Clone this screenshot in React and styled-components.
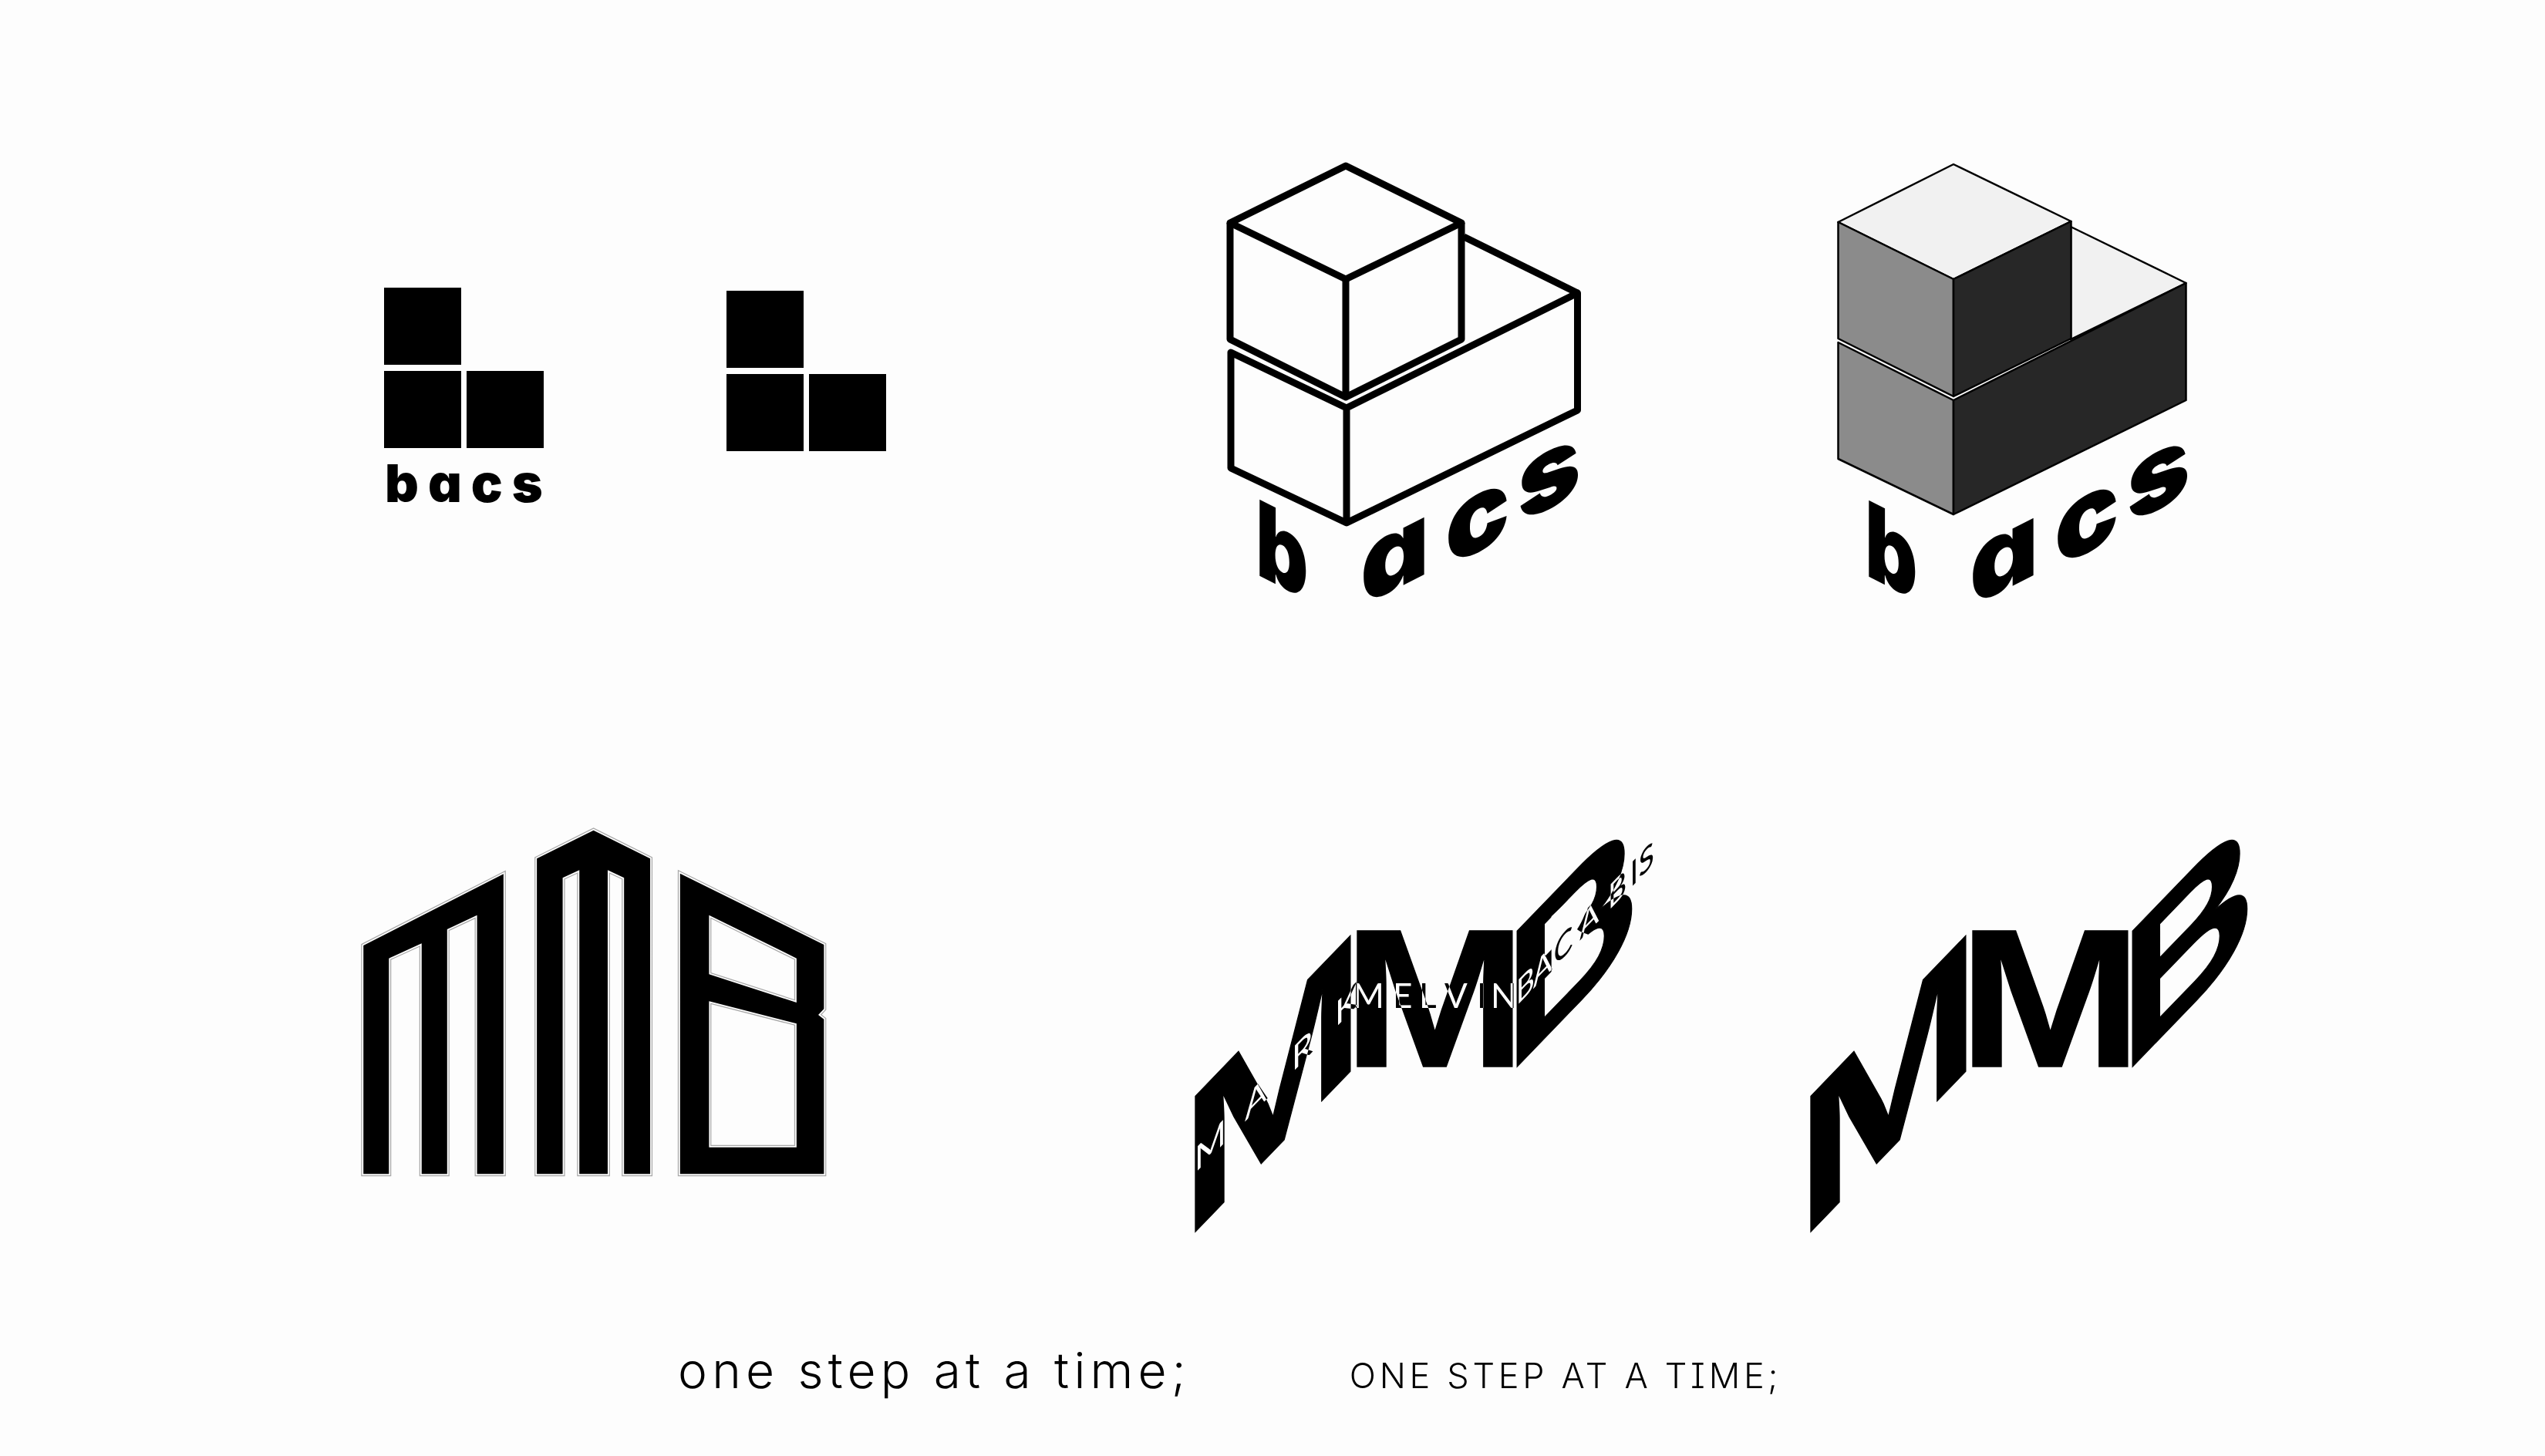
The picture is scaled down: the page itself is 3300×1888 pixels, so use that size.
import React from "react";
import styled, { createGlobalStyle } from "styled-components";

const GlobalStyle = createGlobalStyle`
  html, body {
    margin: 0;
    padding: 0;
    background: #fdfdfd;
  }
`;

const Sheet = styled.div`
  width: 3300px;
  height: 1888px;
  overflow: hidden;
  background: #fdfdfd;
  color: #000;
  font-family: "Liberation Sans", Arial, sans-serif;
`;

const TopRow = styled.section`
  display: flex;
  align-items: flex-start;
  height: 620px;
  padding: 190px 0 0 498px;
`;

const BottomRow = styled.section`
  display: flex;
  align-items: flex-start;
  height: 570px;
  padding: 240px 0 0 450px;
`;

const SloganRow = styled.section`
  display: flex;
  align-items: baseline;
  padding: 112px 0 0 879px;
`;

const BlockMark = styled.div`
  display: grid;
  grid-template-columns: 100px 100px;
  grid-auto-rows: 100px;
  column-gap: 7px;
  row-gap: 8px;
  margin-top: ${(p) => p.$top}px;
  margin-left: ${(p) => p.$left || 0}px;
  width: 207px;
`;

const Block = styled.div`
  background: #000;
  grid-column: ${(p) => p.$col};
`;

const Wordmark = styled.div`
  grid-column: 1 / 3;
  margin-top: 1px;
  padding-left: 1px;
  font-family: Inter, "Liberation Sans", sans-serif;
  font-weight: 900;
  font-feature-settings: "cv11";
  font-size: 68px;
  line-height: 72px;
  letter-spacing: 12px;
  white-space: nowrap;
`;

const Mark = styled.svg`
  display: block;
  flex: none;
  overflow: visible;
  margin-left: ${(p) => p.$left || 0}px;
  margin-top: ${(p) => p.$top || 0}px;
`;

const LogoText = styled.text`
  font-family: Inter, "Liberation Sans", sans-serif;
  font-weight: 900;
  font-feature-settings: "cv11";
  font-size: 136px;
  fill: #000;
`;

const HeavyLetter = styled.text`
  font-family: "Liberation Sans", Arial, sans-serif;
  font-weight: 700;
  font-size: 256px;
  fill: #000;
  stroke: #000;
  stroke-width: 1.5px;
`;

const NameText = styled.text`
  font-family: Lato, "Liberation Sans", sans-serif;
  font-weight: 400;
  font-size: 44px;
  fill: #fff;
  mix-blend-mode: difference;
`;

const SloganLower = styled.div`
  font-family: Inter, "Noto Sans", sans-serif;
  font-weight: 350;
  font-size: 64px;
  line-height: 90px;
  letter-spacing: 6.2px;
  white-space: nowrap;
`;

const SloganUpper = styled.div`
  margin-left: 206px;
  font-family: Inter, "Noto Sans", sans-serif;
  font-weight: 350;
  font-feature-settings: "cv08";
  font-size: 45px;
  line-height: 90px;
  letter-spacing: 4.7px;
  white-space: nowrap;
`;

// skewed letters sit along the edge of the boxes
function BacsLetters({ dx = 0, dy = 0 }) {
  const letters = [
    { ch: "b", x: 1629, y: 744, skew: 27, sx: 0.78 },
    { ch: "a", x: 1765, y: 787, skew: -27, sx: 1.02 },
    { ch: "c", x: 1875, y: 737, skew: -27, sx: 1.02 },
    { ch: "s", x: 1969, y: 680, skew: -27, sx: 1.02 },
  ];
  return letters.map((l) => (
    <LogoText
      key={l.ch}
      transform={`translate(${l.x + dx} ${l.y + dy}) skewY(${l.skew}) scale(${l.sx} 1)`}
    >
      {l.ch}
    </LogoText>
  ));
}

function OutlineCubes() {
  return (
    <Mark width="540" height="620" viewBox="1560 190 540 620" $left={410}>
      <g fill="none" stroke="#000" strokeWidth="9" strokeLinejoin="round">
        <path d="M1596 289 L1746 215 L1896 289 L1746 362 Z" />
        <path d="M1596 289 V440 L1746 515 L1896 440 V289 M1746 362 V515" />
        <path d="M1597 457 V607 L1747 678 L2046.5 532 V380 L1747 529 Z M1747 529 V678" />
        <path d="M1899 307 L2046.5 380" />
      </g>
      <BacsLetters />
    </Mark>
  );
}

function ShadedCubes() {
  return (
    <Mark width="540" height="620" viewBox="2350 190 540 620" $left={250}>
      <g stroke="#000" strokeWidth="2.5" strokeLinejoin="round">
        <path fill="#f1f1f1" d="M2686 294 L2835.5 367 L2686 440 Z" />
        <path fill="#f1f1f1" d="M2384.5 288 L2534 213 L2686.5 287 L2534 362 Z" />
        <path fill="#8b8b8b" d="M2384.5 288 L2534 362 V514 L2384.5 439 Z" />
        <path fill="#272727" d="M2534 362 L2686.5 287 V439 L2534 514 Z" />
        <path fill="#8b8b8b" d="M2384.5 444 L2534 519 V667 L2384.5 595 Z" />
        <path fill="#272727" d="M2534 519 L2835.5 367 V519 L2534 667 Z" />
      </g>
      <BacsLetters dx={790} dy={1} />
    </Mark>
  );
}

const houseOutline =
  "M52 528 L497 250 V1417 H413 V410 L318 465 V1417 H237 V520 L133 578 V1417 H52 Z " +
  "M603 190 L783 80 L963 190 V1417 H880 V265 L828 235 V1417 H738 V235 L685 265 V1417 H603 Z " +
  "M1058 248 L1515 525 V775 L1497 798 L1515 815 V1417 H1058 Z " +
  "M1150 410 L1428 578 V750 L1150 640 Z M1150 745 L1428 832 V1313 H1150 Z";

function HouseMark() {
  return (
    <Mark width="640" height="500" viewBox="0 0 1568 1500" preserveAspectRatio="none">
      <path d={houseOutline} fill="none" stroke="#a8a8a8" strokeWidth="6" vectorEffect="non-scaling-stroke" />
      <path d={houseOutline} fill="none" stroke="#fdfdfd" strokeWidth="3.5" vectorEffect="non-scaling-stroke" />
      <path d={houseOutline} fill="#000" fillRule="evenodd" />
    </Mark>
  );
}

function SkewedMmb({ dx = 0 }) {
  return (
    <>
      <HeavyLetter transform={`translate(${2329 + dx} 1617) skewY(-46) scale(1.12 1)`}>M</HeavyLetter>
      <HeavyLetter transform={`translate(${2539 + dx} 1383) scale(1.12 1)`}>M</HeavyLetter>
      <HeavyLetter transform={`translate(${2749 + dx} 1400) skewY(-46) scale(0.95 1)`}>B</HeavyLetter>
    </>
  );
}

function NamedMmb() {
  return (
    <Mark width="640" height="560" viewBox="1530 1060 640 560" $left={440} $top={10}>
      <SkewedMmb dx={-798} />
      {/* this version of the B has the middle bar opened up */}
      <path
        fill="#fdfdfd"
        d="M2011.7 1188.3 L2050 1151.7 C2060 1145 2065 1150 2061.7 1163.3 C2058 1180 2052 1195 2045 1205 C2053 1212 2065 1210 2068.3 1220 C2070 1233 2063 1243 2053 1253 L2011.7 1300 Z"
      />
      <NameText x="0 65 126 182" transform="translate(1549 1522) skewY(-46)">MARK</NameText>
      <NameText x="1754 1806 1840 1873 1915 1933" y="1307">MELVIN</NameText>
      <NameText x="0 26 58 98 142 176 189" transform="translate(1966 1305) skewY(-46) scale(0.84 1)">BACABIS</NameText>
    </Mark>
  );
}

function PlainMmb() {
  return (
    <Mark width="620" height="560" viewBox="2320 1060 620 560" $left={150} $top={10}>
      <SkewedMmb />
    </Mark>
  );
}

export default function App() {
  return (
    <Sheet>
      <GlobalStyle />
      <TopRow>
        <BlockMark $top={183}>
          <Block $col={1} />
          <div />
          <Block $col={1} />
          <Block $col={2} />
          <Wordmark>bacs</Wordmark>
        </BlockMark>
        <BlockMark $top={187} $left={237}>
          <Block $col={1} />
          <div />
          <Block $col={1} />
          <Block $col={2} />
        </BlockMark>
        <OutlineCubes />
        <ShadedCubes />
      </TopRow>
      <BottomRow>
        <HouseMark />
        <NamedMmb />
        <PlainMmb />
      </BottomRow>
      <SloganRow>
        <SloganLower>one step at a time;</SloganLower>
        <SloganUpper>ONE STEP AT A TIME;</SloganUpper>
      </SloganRow>
    </Sheet>
  );
}
